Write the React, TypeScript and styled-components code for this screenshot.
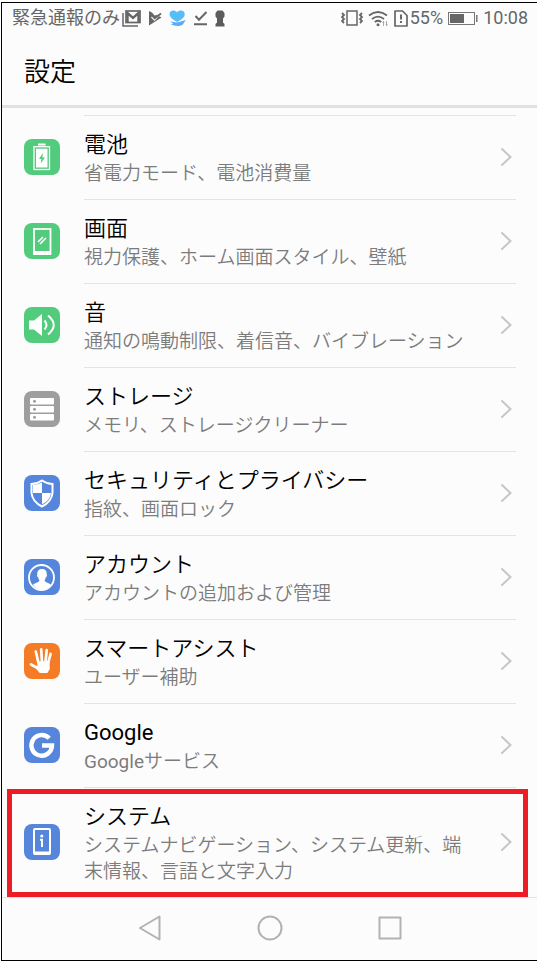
import React from "react";
import styled, { createGlobalStyle } from "styled-components";

const GlobalStyle = createGlobalStyle`
  * { box-sizing: border-box; }
  body {
    margin: 0;
    background: #fff;
    font-family: Roboto, "Noto Sans CJK JP", sans-serif;
  }
`;

const Page = styled.div`
  padding: 2px 0 0 1px;
`;

const Frame = styled.div`
  min-height: calc(100vh - 2px);
  display: flex;
  flex-direction: column;
  border: 1px solid #000;
  border-right: 0;
  background: #fcfcfc;
`;

const StatusBar = styled.div`
  display: flex;
  align-items: center;
  justify-content: space-between;
  height: 30px;
  padding: 0 9px 0 10px;
  color: #666;
  font-size: 18px;
  line-height: 30px;
  white-space: nowrap;
`;

const StatusGroup = styled.div<{ $gap: number }>`
  display: flex;
  align-items: center;
  gap: ${(p) => p.$gap}px;
  svg { display: block; flex: none; }
`;

const Tight = styled.span`
  display: flex;
  align-items: center;
  gap: 2px;
`;

const Header = styled.header`
  display: flex;
  align-items: center;
  height: 75px;
  padding: 6px 22px 0;
  border-bottom: 3px solid #e1e1e1;
`;

const Heading = styled.h1`
  margin: 0;
  color: #000;
  font-size: 26px;
  font-weight: 350;
  line-height: 38px;
`;

const List = styled.ul`
  flex: 1;
  margin: 0;
  padding: 7px 0 0;
  list-style: none;
`;

const Item = styled.li`
  position: relative;
`;

const RowLink = styled.a`
  display: flex;
  align-items: stretch;
  gap: 24px;
  padding: 0 21px 0 22px;
  color: inherit;
  text-decoration: none;
`;

const Badge = styled.span<{ $color: string }>`
  flex: none;
  align-self: center;
  width: 36px;
  height: 36px;
  border-radius: 8px;
  background: ${(p) => p.$color};
  svg { display: block; }
`;

const Body = styled.span`
  flex: 1;
  min-width: 0;
  display: flex;
  align-items: center;
  gap: 28px;
  padding: 0 3px 2px 0;
  border-top: 1px solid #e3e3e3;
`;

const Labels = styled.span`
  flex: 1;
  min-width: 0;
  padding: 13px 0 10px;
`;

const Title = styled.span`
  display: block;
  color: #000;
  font-size: 22px;
  font-weight: 350;
  line-height: 32px;
`;

const Detail = styled.span`
  display: block;
  color: #7c7c7c;
  font-size: 19px;
  font-weight: 350;
  line-height: 26px;
`;

const Latin = styled.span`
  font-weight: 400;
`;

const Highlight = styled.div`
  position: absolute;
  inset: 2px 9px 0 5px;
  border: 5px solid #ee1c24;
  pointer-events: none;
`;

const NavBar = styled.nav`
  display: grid;
  grid-template-columns: repeat(3, 120px);
  justify-content: center;
  height: 63px;
  padding-bottom: 2px;
  border-top: 1px solid #e3e3e3;
`;

const NavButton = styled.button`
  display: flex;
  align-items: center;
  justify-content: center;
  padding: 0;
  border: 0;
  background: none;
`;

const BatteryIcon = () => (
  <svg width="36" height="36" fill="none" stroke="#fff">
    <path d="M14 4.500h7.500v2H14z" fill="#fff" stroke="none" />
    <rect x="10" y="7.700" width="15.500" height="22.800" strokeWidth="1.300" />
    <rect x="12" y="9.700" width="11.500" height="18.800" fill="#fff" stroke="none" />
    <path d="M18.800 14 15 20h2.500l-.8 4.500L21 18.500h-2.500z" fill="#53cb7d" stroke="none" />
  </svg>
);

const ScreenIcon = () => (
  <svg width="36" height="36" fill="none" stroke="#fff">
    <rect x="10" y="6" width="16.500" height="25" strokeWidth="1.800" />
    <path d="M9.500 28h17.500v4h-17.500z" fill="#fff" stroke="none" />
    <path d="m14 19 5-5m-3 7 6-6" strokeWidth="1.600" />
  </svg>
);

const SoundIcon = () => (
  <svg width="36" height="36" fill="none" stroke="#fff">
    <path d="M5 13.500h5l8-6.500v22l-8-6.500h-5z" fill="#fff" stroke="none" />
    <path d="M20.500 13.500q4 4.500 0 9M24 8.500q11.500 9.500 0 19" strokeWidth="2" />
  </svg>
);

const StorageIcon = () => (
  <svg width="36" height="36">
    {[7, 15, 23].map((y) => (
      <g key={y}>
        <rect x="6" y={y} width="24" height="6.500" rx="1" fill="#fff" />
        <circle cx="10.500" cy={y + 3.2} r="1.500" fill="#9e9e9e" />
      </g>
    ))}
  </svg>
);

const ShieldIcon = () => (
  <svg width="36" height="36">
    <path d="M18 5.500q5 3.500 10.500 3.500v9q-1 9-10.500 13.500Q8.500 27 7.500 18V9q5.500 0 10.500-3.500z" fill="#5586dc" stroke="#fff" strokeWidth="2" />
    <path d="M18 7.500V18H9v-8q4.500-.3 9-2.500zM18 18h9q-1 7.500-9 11.500z" fill="#fff" />
  </svg>
);

const AccountIcon = () => (
  <svg width="36" height="36">
    <circle cx="17.500" cy="18.500" r="12.500" fill="none" stroke="#fff" strokeWidth="1.800" />
    <path d="M18 10c3.800 0 5 2.500 4.700 5.500.8 1-.2 2.500-.8 2.800-.4 1.700-1 2.500-1.400 3 .2 2.500 5.500 2.700 6.500 4.700-4.500 6-13.500 6-18 0 1-2 6.300-2.200 6.500-4.700-.5-.5-1-1.300-1.400-3-.6-.3-1.600-1.800-.8-2.800C13 12.500 14.200 10 18 10z" fill="#fff" />
  </svg>
);

const HandIcon = () => (
  <svg width="36" height="36" fill="none" stroke="#fff" strokeLinecap="round" strokeLinejoin="round">
    <path d="m14.500 20-2.700-11.500M18 19l-.8-12.700M21.500 19l1.200-12M24 20.500l2.600-9.500M14.500 25.500 7 21.500" strokeWidth="2.700" />
    <path d="M14.300 19.500 24.500 19l.3 6.500-2 3.500h-6.500l-4.300-5 2.500-.5z" fill="#fff" strokeWidth="2" />
  </svg>
);

const GoogleIcon = () => (
  <svg width="36" height="36" fill="none" stroke="#fff" strokeWidth="4.400">
    <path d="M25.200 11.300A10.300 10.300 0 1 0 28 18.500H18" />
  </svg>
);

const SystemIcon = () => (
  <svg width="36" height="36" fill="none" stroke="#fff">
    <rect x="10" y="5" width="16" height="25" rx="1" strokeWidth="2" />
    <path d="M10 29h16" strokeWidth="3" />
    <circle cx="17.800" cy="12" r="1.600" fill="#fff" stroke="none" />
    <path d="M16 15.700h2V23" strokeWidth="2" />
  </svg>
);

const Chevron = () => (
  <svg width="13" height="20" viewBox="0 0 13 20" fill="none" stroke="#c6c6c6" strokeWidth="2" strokeLinecap="round">
    <path d="m2 2 8.500 8L2 18" />
  </svg>
);

const MailIcon = () => (
  <svg width="19" height="17" fill="none" stroke="#666">
    <path d="M1 3v13h15" strokeWidth="1.500" />
    <rect x="4" y="1" width="14" height="11.500" strokeWidth="1.700" />
    <path d="M5.500 12V3l5.500 5 5.500-5v9" strokeWidth="2.400" />
  </svg>
);

const PlayCheckIcon = () => (
  <svg width="14" height="16">
    <path d="M1 1l3 1.500 2.500 3L9 5l4.500 2.500L1 15.500z" fill="#666" />
    <path d="m3.500 7 3 3.200L12 4" fill="none" stroke="#fcfcfc" strokeWidth="1.200" />
    <path d="m4.500 5.500 2.200 2.700L13 3.500" fill="none" stroke="#666" strokeWidth="1.800" />
  </svg>
);

const HeartHandIcon = () => (
  <svg width="18" height="17">
    <path d="M8 12C3 9 .5 6.500.5 4.200.5-.2 5.700-.5 8 2.200 10.300-.5 16 0 15.700 4.400 15.500 7.500 12 9.800 8 12z" fill="#57bdf7" />
    <path d="M1 11.500c4 .2 5 1.300 8 .8l7.800-2.300-3 4.500c-3.800 2.500-8 1.500-12-.2l2.500-.8z" fill="#61a9f4" />
  </svg>
);

const CheckLineIcon = () => (
  <svg width="14" height="16" fill="none" stroke="#666" strokeWidth="2">
    <path d="m1.500 6 3.500 3.800L12.500 2M0 14.200h13" />
  </svg>
);

const KeyholeIcon = () => (
  <svg width="10" height="17">
    <path d="M2.500.5h5L9.500 3v3.500L8 8.500v4l1.500 1.500v2.500H.5V14L2 12.500v-4L.5 6.500V3z" fill="#5c5c5c" />
  </svg>
);

const VibrateIcon = () => (
  <svg width="22" height="16" fill="none" stroke="#666" strokeWidth="1.500">
    <rect x="6" y="1" width="10" height="14" />
    <path d="M1 3l2 2-2 2 2 2-2 2 2 2M21 3l-2 2 2 2-2 2 2 2-2 2" strokeWidth="1.800" />
  </svg>
);

const WifiIcon = () => (
  <svg width="21" height="17" fill="none" stroke="#666" strokeWidth="1.800">
    <path d="M1 5.500q9-7 18 0M4 9q6-4.800 12 0M6.800 12q3.200-2.500 6.400 0" />
    <circle cx="10" cy="14.700" r="1.500" fill="#666" stroke="none" />
    <path d="M15.500 11v5M18.500 11v5" stroke="#aaa" strokeWidth="1" />
    <path d="m14 13 1.500-2 1 2zm3.500 1 1 2 1.500-2z" fill="#aaa" stroke="none" />
  </svg>
);

const SimIcon = () => (
  <svg width="14" height="17" fill="none" stroke="#666" strokeWidth="1.700">
    <path d="M1 1h7.500L13 5.500V16H1z" strokeLinejoin="round" />
    <path d="M7 4.500v5M7 11v2" strokeWidth="2" />
  </svg>
);

const BatteryLevelIcon = () => (
  <svg width="30" height="13" fill="none" stroke="#777">
    <rect x="0.500" y="0.500" width="26" height="12" />
    <path d="M2 2h14v9H2z" fill="#666" stroke="none" />
    <path d="M28.800 3v7" strokeWidth="1.500" />
  </svg>
);

const GREEN = "#53cb7d";
const BLUE = "#5586dc";

type Setting = {
  id: string;
  title: React.ReactNode;
  detail: React.ReactNode;
  color: string;
  Icon: React.FC;
  highlighted?: boolean;
};

const settings: Setting[] = [
  { id: "battery", title: "電池", detail: "省電力モード、電池消費量", color: GREEN, Icon: BatteryIcon },
  { id: "display", title: "画面", detail: "視力保護、ホーム画面スタイル、壁紙", color: GREEN, Icon: ScreenIcon },
  { id: "sound", title: "音", detail: "通知の鳴動制限、着信音、バイブレーション", color: GREEN, Icon: SoundIcon },
  { id: "storage", title: "ストレージ", detail: "メモリ、ストレージクリーナー", color: "#9e9e9e", Icon: StorageIcon },
  { id: "security", title: "セキュリティとプライバシー", detail: "指紋、画面ロック", color: BLUE, Icon: ShieldIcon },
  { id: "account", title: "アカウント", detail: "アカウントの追加および管理", color: BLUE, Icon: AccountIcon },
  { id: "assist", title: "スマートアシスト", detail: "ユーザー補助", color: "#f57c26", Icon: HandIcon },
  {
    id: "google",
    title: <Latin>Google</Latin>,
    detail: (
      <>
        <Latin>Google</Latin>サービス
      </>
    ),
    color: BLUE,
    Icon: GoogleIcon,
  },
  {
    id: "system",
    title: "システム",
    detail: "システムナビゲーション、システム更新、端末情報、言語と文字入力",
    color: BLUE,
    Icon: SystemIcon,
    highlighted: true,
  },
];

export default function App() {
  return (
    <>
      <GlobalStyle />
      <Page>
        <Frame>
          <StatusBar>
            <StatusGroup $gap={7}>
              <Tight>
                <span>緊急通報のみ</span>
                <MailIcon />
              </Tight>
              <PlayCheckIcon />
              <HeartHandIcon />
              <CheckLineIcon />
              <KeyholeIcon />
            </StatusGroup>
            <StatusGroup $gap={5}>
              <VibrateIcon />
              <WifiIcon />
              <Tight>
                <SimIcon />
                <span>55%</span>
              </Tight>
              <BatteryLevelIcon />
              <span>10:08</span>
            </StatusGroup>
          </StatusBar>
          <Header>
            <Heading>設定</Heading>
          </Header>
          <List>
            {settings.map(({ id, title, detail, color, Icon, highlighted }) => (
              <Item key={id}>
                <RowLink href={`#${id}`}>
                  <Badge $color={color}>
                    <Icon />
                  </Badge>
                  <Body>
                    <Labels>
                      <Title>{title}</Title>
                      <Detail>{detail}</Detail>
                    </Labels>
                    <Chevron />
                  </Body>
                </RowLink>
                {highlighted && <Highlight />}
              </Item>
            ))}
          </List>
          <NavBar>
            <NavButton aria-label="戻る">
              <svg width="24" height="28" fill="none" stroke="#b2b2b2" strokeWidth="2" strokeLinejoin="round">
                <path d="M21.500 2.500v23L2 14z" />
              </svg>
            </NavButton>
            <NavButton aria-label="ホーム">
              <svg width="28" height="28" fill="none" stroke="#b2b2b2" strokeWidth="2">
                <circle cx="14" cy="14" r="11.500" />
              </svg>
            </NavButton>
            <NavButton aria-label="履歴">
              <svg width="24" height="24" fill="none" stroke="#b2b2b2" strokeWidth="2" strokeLinejoin="round">
                <rect x="1.500" y="1.500" width="21" height="21" />
              </svg>
            </NavButton>
          </NavBar>
        </Frame>
      </Page>
    </>
  );
}
